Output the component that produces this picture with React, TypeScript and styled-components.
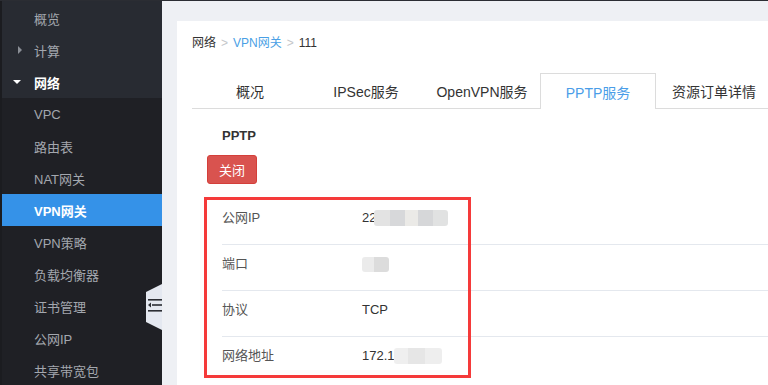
import React from "react";
import styled, {createGlobalStyle, css} from "styled-components";

const GlobalStyle = createGlobalStyle`
  html, body {
    margin: 0;
    padding: 0;
    background: #eef0f4;
  }
  body {
    font-family: "Liberation Sans", "Noto Sans CJK SC", Arial, sans-serif;
  }
`

const Page = styled.div`
  display: flex;
  height: 385px;
  width: 768px;
  box-sizing: border-box;
  border-top: 1px solid #2b2d33;
  overflow: hidden;
`

const Sidebar = styled.nav`
  position: relative;
  width: 162px;
  flex-shrink: 0;
  background: #1f2025;
  border-left: 2px solid #1b1c20;
  box-sizing: border-box;
`

const TopGroup = styled.div`
  background: #282b32;
  padding-top: 1px;
`

const MenuItem = styled.div<{ $active?: boolean; $open?: boolean }>`
  display: flex;
  align-items: center;
  height: 32px;
  padding-left: 10px;
  font-size: 13px;
  color: #a3a7ae;
  ${p => p.$open && css`
    color: #fff;
    font-weight: bold;
  `}
  ${p => p.$active && css`
    background: #3592e8;
    color: #fff;
    font-weight: bold;
  `}
`

const CaretSlot = styled.span`
  width: 22px;
  display: flex;
  align-items: center;
`

const Caret = styled.span<{ $down?: boolean }>`
  width: 0;
  height: 0;
  ${p => p.$down ? css`
    margin-left: 1px;
    border-left: 4px solid transparent;
    border-right: 4px solid transparent;
    border-top: 4px solid #fff;
  ` : css`
    margin-left: 6px;
    border-top: 4px solid transparent;
    border-bottom: 4px solid transparent;
    border-left: 4px solid #8a8e95;
  `}
`

const CollapseHandle = styled.svg`
  position: absolute;
  right: 0;
  top: 281px;
`

const Main = styled.main`
  flex: 1;
  min-width: 0;
  padding: 20px 0 0 15px;
  overflow: hidden;
`

const Card = styled.section`
  position: relative;
  background: #fff;
  height: 100%;
  width: 620px;
  padding: 14px 0 0 15px;
  box-sizing: border-box;
`

const Breadcrumb = styled.div`
  display: flex;
  gap: 5px;
  font-size: 12px;
  line-height: 16px;
  color: #333;
`

const Crumb = styled.span<{ $link?: boolean; $sep?: boolean }>`
  color: ${p => p.$link ? "#4a9fe5" : p.$sep ? "#c4c6ca" : "#333"};
`

const TabBar = styled.div`
  display: flex;
  margin-top: 22px;
  border-bottom: 1px solid #dcdcdc;
  height: 35px;
`

const Tab = styled.div<{ $active?: boolean }>`
  flex-shrink: 0;
  width: 116px;
  height: 35px;
  box-sizing: border-box;
  display: flex;
  align-items: center;
  justify-content: center;
  font-size: 14px;
  color: #333;
  border: 1px solid transparent;
  border-bottom: none;
  ${p => p.$active && css`
    color: #4a9de8;
    background: #fff;
    border-color: #dcdcdc;
    height: 36px;
  `}
`

const Content = styled.div`
  padding-left: 15px;
`

const Title = styled.h3`
  margin: 18px 0 0 15px;
  font-size: 13px;
  line-height: 18px;
  font-weight: bold;
  color: #333;
`

const DangerButton = styled.button`
  margin-top: 10px;
  height: 29px;
  padding: 0 11px;
  border: 1px solid #d43f3a;
  border-radius: 3px;
  background: #d9534f;
  color: #fff;
  font-family: inherit;
  font-size: 13px;
`

const InfoTable = styled.div`
  margin: 15px 0 0 15px;
`

const Row = styled.div`
  display: flex;
  padding: 11px 0 18px;
  line-height: 16px;
  font-size: 13px;
  border-bottom: 1px solid #e4e8ee;

  &:last-child {
    border-bottom: none;
  }
`

const Label = styled.span`
  width: 140px;
  color: #555;
`

const Value = styled.span`
  display: flex;
  align-items: center;
  color: #333;
`

const Blur = styled.span<{ $w: number; $h: number; $bg: string }>`
  display: inline-block;
  width: ${p => p.$w}px;
  height: ${p => p.$h}px;
  background: ${p => p.$bg};
  border-radius: 3px;
`

const Highlight = styled.div`
  position: absolute;
  left: 27px;
  top: 176px;
  width: 267px;
  height: 181px;
  box-sizing: border-box;
  border: 3px solid #f53a3a;
  pointer-events: none;
`

const topItems = [
  {label: "概览"},
  {label: "计算", caret: "right"},
  {label: "网络", caret: "down", open: true},
]

const subItems = ["VPC", "路由表", "NAT网关", "VPN网关", "VPN策略", "负载均衡器", "证书管理", "公网IP", "共享带宽包"]

const tabs = ["概况", "IPSec服务", "OpenVPN服务", "PPTP服务", "资源订单详情"]

function App() {
  return (
    <>
      <GlobalStyle/>
      <Page>
        <Sidebar>
          <TopGroup>
            {topItems.map(item => (
              <MenuItem key={item.label} $open={item.open}>
                <CaretSlot>{item.caret && <Caret $down={item.caret === "down"}/>}</CaretSlot>
                {item.label}
              </MenuItem>
            ))}
          </TopGroup>
          {subItems.map(label => (
            <MenuItem key={label} $active={label === "VPN网关"}>
              <CaretSlot/>
              {label}
            </MenuItem>
          ))}
          <CollapseHandle width="16" height="48" viewBox="0 0 16 48">
            <polygon points="0,10 16,2 16,48 0,40" fill="#e4e8f0"/>
            <rect x="2" y="17" width="14" height="1.6" fill="#2b2d33"/>
            <rect x="6" y="22.2" width="10" height="1.6" fill="#2b2d33"/>
            <polygon points="2,23 5,20.5 5,25.5" fill="#2b2d33"/>
            <rect x="2" y="28" width="14" height="1.6" fill="#2b2d33"/>
          </CollapseHandle>
        </Sidebar>
        <Main>
          <Card>
            <Breadcrumb>
              <Crumb>网络</Crumb>
              <Crumb $sep>&gt;</Crumb>
              <Crumb $link>VPN网关</Crumb>
              <Crumb $sep>&gt;</Crumb>
              <Crumb>111</Crumb>
            </Breadcrumb>
            <TabBar>
              {tabs.map(t => <Tab key={t} $active={t === "PPTP服务"}>{t}</Tab>)}
            </TabBar>
            <Content>
              <Title>PPTP</Title>
              <DangerButton>关闭</DangerButton>
              <InfoTable>
                <Row>
                  <Label>公网IP</Label>
                  <Value>
                    22
                    <Blur $w={74} $h={16} $bg="linear-gradient(90deg, #e3e3e3 0 22%, #d7d8da 22% 42%, #ebeae7 42% 60%, #d6d7d9 60% 80%, #e1e2e2 80%)" style={{marginLeft: -2}}/>
                  </Value>
                </Row>
                <Row>
                  <Label>端口</Label>
                  <Value>
                    <Blur $w={27} $h={15} $bg="linear-gradient(90deg, #ebebeb 0 45%, #dcdcdc 45%)"/>
                  </Value>
                </Row>
                <Row>
                  <Label>协议</Label>
                  <Value>TCP</Value>
                </Row>
                <Row>
                  <Label>网络地址</Label>
                  <Value>
                    172.1
                    <Blur $w={48} $h={16} $bg="linear-gradient(90deg, #efefef 0 30%, #e6e6e6 30% 65%, #eeeeee 65%)" style={{marginLeft: -1}}/>
                  </Value>
                </Row>
              </InfoTable>
            </Content>
            <Highlight/>
          </Card>
        </Main>
      </Page>
    </>
  );
}

export default App;
